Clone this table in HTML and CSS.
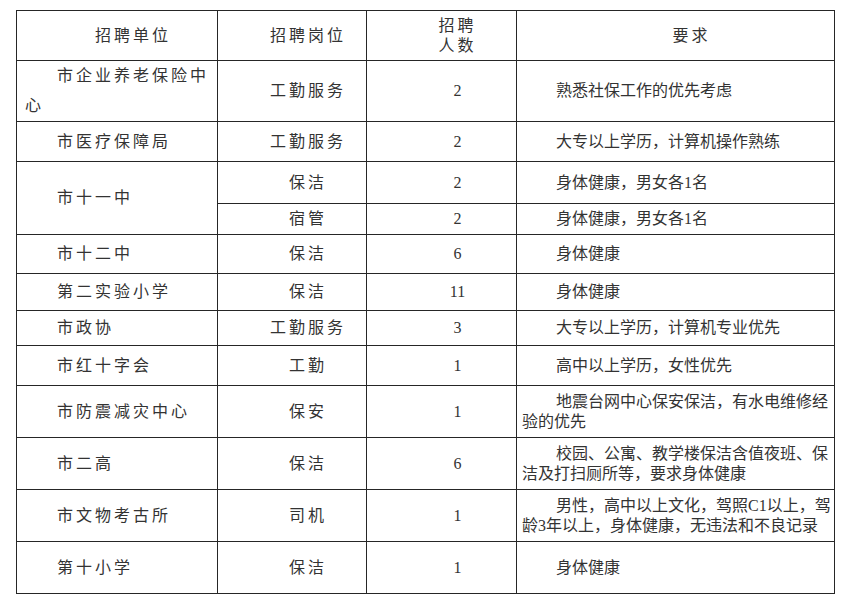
FILE: index.html
```html
<!DOCTYPE html>
<html lang="zh-CN">
<head>
<meta charset="utf-8">
<title>招聘岗位</title>
<link rel="stylesheet" href="styles.css">
</head>
<body>
<div class="sheet">
  <div class="cell head">招聘单位</div>
  <div class="cell head">招聘岗位</div>
  <div class="cell head stack"><span>招聘</span><span>人数</span></div>
  <div class="cell head">要求</div>

  <div class="cell unit">市企业养老保险中心</div>
  <div class="cell post">工勤服务</div>
  <div class="cell num">2</div>
  <div class="cell req">熟悉社保工作的优先考虑</div>

  <div class="cell unit">市医疗保障局</div>
  <div class="cell post">工勤服务</div>
  <div class="cell num">2</div>
  <div class="cell req">大专以上学历，计算机操作熟练</div>

  <div class="cell unit span2">市十一中</div>
  <div class="cell post">保洁</div>
  <div class="cell num">2</div>
  <div class="cell req">身体健康，男女各1名</div>
  <div class="cell post">宿管</div>
  <div class="cell num">2</div>
  <div class="cell req">身体健康，男女各1名</div>

  <div class="cell unit">市十二中</div>
  <div class="cell post">保洁</div>
  <div class="cell num">6</div>
  <div class="cell req">身体健康</div>

  <div class="cell unit">第二实验小学</div>
  <div class="cell post">保洁</div>
  <div class="cell num">11</div>
  <div class="cell req">身体健康</div>

  <div class="cell unit">市政协</div>
  <div class="cell post">工勤服务</div>
  <div class="cell num">3</div>
  <div class="cell req">大专以上学历，计算机专业优先</div>

  <div class="cell unit">市红十字会</div>
  <div class="cell post">工勤</div>
  <div class="cell num">1</div>
  <div class="cell req">高中以上学历，女性优先</div>

  <div class="cell unit">市防震减灾中心</div>
  <div class="cell post">保安</div>
  <div class="cell num">1</div>
  <div class="cell req">地震台网中心保安保洁，有水电维修经验的优先</div>

  <div class="cell unit">市二高</div>
  <div class="cell post">保洁</div>
  <div class="cell num">6</div>
  <div class="cell req">校园、公寓、教学楼保洁含值夜班、保洁及打扫厕所等，要求身体健康</div>

  <div class="cell unit">市文物考古所</div>
  <div class="cell post">司机</div>
  <div class="cell num">1</div>
  <div class="cell req">男性，高中以上文化，驾照C1以上，驾龄3年以上，身体健康，无违法和不良记录</div>

  <div class="cell unit">第十小学</div>
  <div class="cell post">保洁</div>
  <div class="cell num">1</div>
  <div class="cell req">身体健康</div>
</div>
</body>
</html>
```
FILE: styles.css
```css
html, body {
  margin: 0;
  padding: 0;
  background: #fff;
}

body {
  padding: 10px 0 0 16px;
  font-family: "Liberation Serif", "Noto Sans CJK SC", serif;
  font-size: 16px;
  color: #333;
}

.sheet {
  display: grid;
  width: max-content;
  grid-template-columns: 200px 148px 149px 317px;
  grid-template-rows: 49px 60px 39px 41px 30px 38px 36px 34px 39px 51px 51px 51px 51px;
  gap: 1px;
  padding: 1px;
  background: #262626;
}

.cell {
  background: #fff;
  display: flex;
  flex-direction: column;
  justify-content: center;
  text-indent: 2em;
  line-height: 20px;
  overflow: hidden;
}

.head,
.post,
.num {
  text-align: center;
}

.head,
.unit,
.post {
  letter-spacing: 3px;
}

.unit {
  text-align: left;
  padding: 0 4px 0 8px;
  line-height: 30px;
}

.span2 {
  grid-row: span 2;
}

.req {
  text-align: left;
  padding: 0 0 0 5px;
  text-indent: 34px;
}
```
